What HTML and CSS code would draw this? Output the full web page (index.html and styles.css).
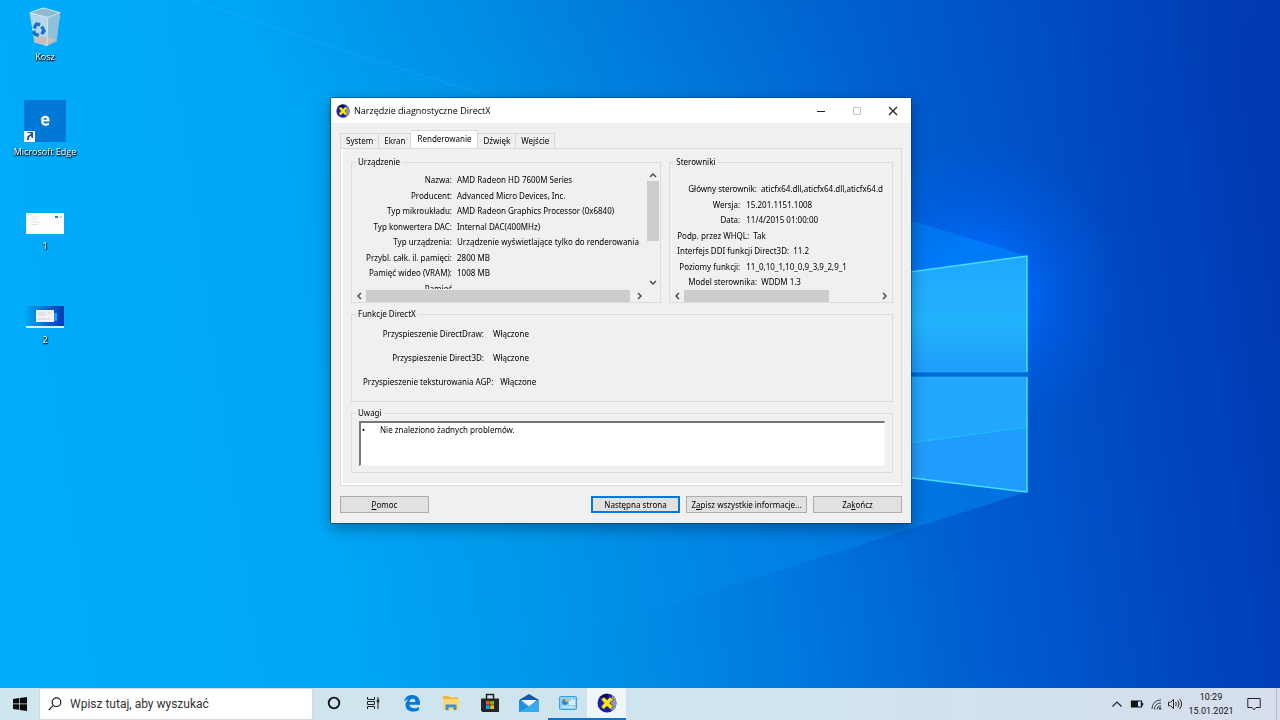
FILE: index.html
```
<!DOCTYPE html>
<html lang="pl">
<head>
  <meta charset="UTF-8">
  <meta name="viewport" content="width=device-width, initial-scale=1.0">
  <title>Narzędzie diagnostyczne DirectX</title>
  <link rel="stylesheet" href="styles.css">
</head>
<body>

  <!-- Wallpaper -->
  <svg class="wallpaper" viewBox="0 0 1280 720" preserveAspectRatio="none" aria-hidden="true">
    <defs>
      <linearGradient id="sky" gradientUnits="userSpaceOnUse" x1="0" y1="420" x2="1270" y2="240">
        <stop offset="0" stop-color="#00adfb"/>
        <stop offset=".24" stop-color="#00a6f6"/>
        <stop offset=".42" stop-color="#0094e8"/>
        <stop offset=".58" stop-color="#007ade"/>
        <stop offset=".74" stop-color="#005ccf"/>
        <stop offset=".88" stop-color="#0048c1"/>
        <stop offset="1" stop-color="#003ab2"/>
      </linearGradient>
      <linearGradient id="mini" x1="0" y1="0" x2="1" y2="0">
        <stop offset="0" stop-color="#00a4f4"/>
        <stop offset="1" stop-color="#003ab2"/>
      </linearGradient>
      <radialGradient id="shade" gradientUnits="userSpaceOnUse" cx="0" cy="0" r="1" gradientTransform="translate(760 -20) scale(560 190)">
        <stop offset="0" stop-color="#0055bb" stop-opacity=".25"/>
        <stop offset="1" stop-color="#0055bb" stop-opacity="0"/>
      </radialGradient>
      <radialGradient id="glow" gradientUnits="userSpaceOnUse" cx="0" cy="0" r="1" gradientTransform="translate(975 295) scale(150 150)">
        <stop offset="0" stop-color="#0072ff"/>
        <stop offset=".3" stop-color="#006cff" stop-opacity=".85"/>
        <stop offset=".65" stop-color="#0064f0" stop-opacity=".35"/>
        <stop offset="1" stop-color="#0060f0" stop-opacity="0"/>
      </radialGradient>
      <linearGradient id="pane" x1="0" y1="0" x2="0" y2="1">
        <stop offset="0" stop-color="#20a8ff"/>
        <stop offset=".6" stop-color="#22b2fb"/>
        <stop offset="1" stop-color="#1e9cfb"/>
      </linearGradient>
      <linearGradient id="ray" x1="0" y1="0" x2="1" y2="0">
        <stop offset="0" stop-color="#00a8ff" stop-opacity="0"/>
        <stop offset=".5" stop-color="#00a0f8" stop-opacity=".1"/>
        <stop offset="1" stop-color="#0098ff" stop-opacity=".6"/>
      </linearGradient>
    </defs>
    <rect width="1280" height="720" fill="url(#sky)"/>
    <rect width="1280" height="720" fill="url(#shade)"/>
    <rect width="1280" height="720" fill="url(#glow)"/>
    <path d="M190 0 1027 256V492L560 640 200 720V0z" fill="url(#ray)" opacity=".7"/>
    <path d="M190 0 480 94" stroke="#48b8f8" stroke-opacity=".25"/>
    <path d="M800 287 1027 256V372H800z" fill="url(#pane)"/>
    <path d="M800 377H1027V492L800 464z" fill="#209cfc"/>
    <path d="M800 377H1027V427L800 458z" fill="#28b4ff" opacity=".45"/>
    <path d="M800 458 1027 427" stroke="#1fc0fb" fill="none"/>
    <path d="M800 287 1027 256V372M1027 377V492L800 464" stroke="#42e0fc" stroke-width="1.5" fill="none"/>
    <path d="M800 372H1027M800 377H1027" stroke="#22b8fb" stroke-width="1" fill="none"/>
    <path d="M800 374.500H1030" stroke="#0068d8" stroke-width="4" fill="none"/>
  </svg>

  <main class="desktop">

    <!-- Desktop shortcuts -->
    <a class="shortcut bin" href="#">
      <svg width="36" height="40" viewBox="3 0 36 42" aria-hidden="true">
        <path d="M5 6 19 1 37 6 33 36 23 41 10 37z" fill="#b7d9ea" opacity=".85"/>
        <path d="M5 6 19 1 37 6 24 11z" fill="#8fb9cf"/>
        <path d="M5 6 24 11 23 41 10 37z" fill="#b4d8ea"/>
        <path d="M24 11 37 6 33 36 23 41z" fill="#8fbfd9"/>
        <path d="M9 33 20 31 33 34 23 40 10 37z" fill="#c8bdb9"/>
        <path d="M5 6 19 1 37 6 24 11zM24 11 23 41" stroke="#cfe6f2" fill="none"/>
        <g fill="none" stroke="#1c70c4" stroke-width="3.500">
          <path d="M9.500 22.500 12 18 16 18.500"/>
          <path d="M17.500 20.500 20 25 17.500 28.500"/>
          <path d="M14.500 30 10.500 28.500 9 25"/>
        </g>
      </svg>
      <span>Kosz</span>
    </a>
    <a class="shortcut edge" href="#">
      <svg width="42" height="42" viewBox="0 0 42 42" aria-hidden="true">
        <rect width="42" height="42" fill="#0078d7"/>
        <path d="M16.500 20.500c.3-3 2.300-4.700 4.800-4.700 2.700 0 4.300 1.800 4.300 4.500v1.200h-6.200c.2 1.500 1.300 2 2.700 2 1.100 0 2-.3 2.800-.8v2.200c-.9.500-2 .8-3.300.8-2.700 0-4.500-1.500-4.500-3.900 0-1.200.6-2.200 1.500-2.800-.9.200-1.600.7-2.100 1.500zm3-.8h3.400c-.1-1-.6-1.700-1.600-1.700s-1.600.7-1.800 1.700z" fill="#fff"/>
        <rect x="0" y="31" width="11" height="11" fill="#f4f6fa"/>
        <path d="M3 40c-.5-3 1-5 3.500-5.500V33H3.500v-1H9v6H8l-1-2c-2 .6-2.500 2-2 4z" fill="#204f9c"/>
      </svg>
      <span>Microsoft Edge</span>
    </a>
    <a class="shortcut shot-one" href="#">
      <svg width="38" height="21" viewBox="0 0 38 21" aria-hidden="true">
        <rect width="38" height="21" fill="#fdfdfd"/>
        <path d="M2 1.500h4M5 4h8M5 6.500h6M5 9h9M5 11.500h7" stroke="#e0e2e4"/>
        <path d="M29 4h3" stroke="#1c7fd8" stroke-width="2"/>
        <path d="M33 4h3" stroke="#8ec0ea"/>
      </svg>
      <span>1</span>
    </a>
    <a class="shortcut shot-two" href="#">
      <svg width="38" height="22" viewBox="0 0 38 22" aria-hidden="true">
        <rect width="38" height="21" fill="url(#mini)"/>
        <rect x="24" y="7" width="7" height="8" fill="#1e9cfb"/>
        <rect x="10" y="4" width="18" height="12" fill="#f2f2f2"/>
        <path d="M12 7h7M12 9h8M21 7h5M12 13h12" stroke="#cfcfcf"/>
        <rect y="20" width="38" height="2" fill="#dcecf4"/>
      </svg>
      <span>2</span>
    </a>

    <!-- Diagnostic tool window -->
    <section class="window" aria-label="Narzędzie diagnostyczne DirectX">
      <header class="title-bar">
        <svg width="14" height="14" viewBox="0 0 20 20" aria-hidden="true">
          <use href="#dx-logo"/>
        </svg>
        <h1>Narzędzie diagnostyczne DirectX</h1>
        <button class="caption-btn" aria-label="Minimalizuj"><svg width="10" height="10" viewBox="0 0 10 10"><path d="M1 5.500h8" stroke="#222"/></svg></button>
        <button class="caption-btn" aria-label="Maksymalizuj" disabled><svg width="10" height="10" viewBox="0 0 10 10"><path d="M1.500 1.500h7v7h-7z" fill="none" stroke="#c4c4c4"/></svg></button>
        <button class="caption-btn" aria-label="Zamknij"><svg width="10" height="10" viewBox="0 0 10 10"><path d="M1 1l8 8M9 1l-8 8" stroke="#222" stroke-width="1.200"/></svg></button>
      </header>

      <div class="tabs" role="tablist">
        <button class="tab" role="tab">System</button>
        <button class="tab" role="tab">Ekran</button>
        <button class="tab active" role="tab" aria-selected="true">Renderowanie</button>
        <button class="tab" role="tab">Dźwięk</button>
        <button class="tab" role="tab">Wejście</button>
      </div>

      <div class="panel" role="tabpanel">
        <div class="groups">
          <fieldset class="group device">
            <legend>Urządzenie</legend>
            <div class="scroll-area">
              <dl class="props">
                <div><dt>Nazwa:</dt><dd>AMD Radeon HD 7600M Series</dd></div>
                <div><dt>Producent:</dt><dd>Advanced Micro Devices, Inc.</dd></div>
                <div><dt>Typ mikroukładu:</dt><dd>AMD Radeon Graphics Processor (0x6840)</dd></div>
                <div><dt>Typ konwertera DAC:</dt><dd>Internal DAC(400MHz)</dd></div>
                <div><dt>Typ urządzenia:</dt><dd>Urządzenie wyświetlające tylko do renderowania</dd></div>
                <div><dt>Przybl. całk. il. pamięci:</dt><dd>2800 MB</dd></div>
                <div><dt>Pamięć wideo (VRAM):</dt><dd>1008 MB</dd></div>
                <div><dt>Pamięć</dt><dd></dd></div>
              </dl>
              <div class="scroll-y">
                <svg width="12" height="12" viewBox="0 0 12 12"><path d="M3 8l3-3 3 3" class="arrow"/></svg>
                <div class="thumb"></div>
                <svg width="12" height="12" viewBox="0 0 12 12"><path d="M3 4l3 3 3-3" class="arrow"/></svg>
              </div>
            </div>
            <div class="scroll-x">
              <svg width="14" height="12" viewBox="0 0 14 12"><path d="M9 3L6 6l3 3" class="arrow"/></svg>
              <div class="thumb"></div>
              <svg width="14" height="12" viewBox="0 0 14 12"><path d="M5 3l3 3-3 3" class="arrow"/></svg>
            </div>
          </fieldset>

          <fieldset class="group drivers">
            <legend>Sterowniki</legend>
            <dl class="props">
              <div class="indent"><dt>Główny sterownik:</dt><dd>aticfx64.dll,aticfx64.dll,aticfx64.d</dd></div>
              <div class="column"><dt>Wersja:</dt><dd>15.201.1151.1008</dd></div>
              <div class="column"><dt>Data:</dt><dd>11/4/2015 01:00:00</dd></div>
              <div><dt>Podp. przez WHQL:</dt><dd>Tak</dd></div>
              <div><dt>Interfejs DDI funkcji Direct3D:</dt><dd>11.2</dd></div>
              <div class="column"><dt>Poziomy funkcji:</dt><dd>11_0,10_1,10_0,9_3,9_2,9_1</dd></div>
              <div class="indent"><dt>Model sterownika:</dt><dd>WDDM 1.3</dd></div>
            </dl>
            <div class="scroll-x">
              <svg width="14" height="12" viewBox="0 0 14 12"><path d="M9 3L6 6l3 3" class="arrow"/></svg>
              <div class="thumb"></div>
              <svg width="14" height="12" viewBox="0 0 14 12"><path d="M5 3l3 3-3 3" class="arrow"/></svg>
            </div>
          </fieldset>
        </div>

        <fieldset class="group features">
          <legend>Funkcje DirectX</legend>
          <dl>
            <div><dt>Przyspieszenie DirectDraw:</dt><dd>Włączone</dd></div>
            <div><dt>Przyspieszenie Direct3D:</dt><dd>Włączone</dd></div>
            <div class="wide"><dt>Przyspieszenie teksturowania AGP:</dt><dd>Włączone</dd></div>
          </dl>
        </fieldset>

        <fieldset class="group notes">
          <legend><label for="notes">Uwagi</label></legend>
          <textarea id="notes" readonly>•&#9;Nie znaleziono żadnych problemów.</textarea>
        </fieldset>
      </div>

      <footer class="actions">
        <button class="btn help"><u>P</u>omoc</button>
        <button class="btn primary">Następna strona</button>
        <button class="btn save">Z<u>a</u>pisz wszystkie informacje...</button>
        <button class="btn">Za<u>k</u>ończ</button>
      </footer>
    </section>
  </main>

  <!-- Taskbar -->
  <nav class="taskbar" aria-label="Pasek zadań">
    <button class="start" aria-label="Start">
      <svg width="14" height="14" viewBox="0 0 14 14"><path d="M0 2l6-.9v5.500H0zM6.700 1 14 0v6.600H6.700zM0 7.300h6v5.500L0 12zM6.700 7.300H14V14l-7.300-1z" fill="#0a0a0a"/></svg>
    </button>
    <label class="search">
      <svg width="14" height="14" viewBox="0 0 14 14" fill="none" stroke="#222" stroke-width="1.200"><circle cx="8.500" cy="5.200" r="4.300"/><path d="M5.400 8.400.8 13"/></svg>
      <input type="text" placeholder="Wpisz tutaj, aby wyszukać" aria-label="Wyszukaj">
    </label>
    <div class="apps">
      <button class="app" aria-label="Cortana">
        <svg width="14" height="14" viewBox="0 0 14 14"><circle cx="7" cy="7" r="5.300" fill="none" stroke="#111" stroke-width="1.800"/></svg>
      </button>
      <button class="app" aria-label="Widok zadań">
        <svg width="14" height="14" viewBox="0 0 14 14" fill="none" stroke="#222"><path d="M1.500 1v2.500h7V1M1.500 13v-2.500h7V13M1.500 5.500h7v3h-7zM12 1v12"/><path d="M12 3.500v3" stroke-width="2.400"/></svg>
      </button>
      <button class="app" aria-label="Edge">
        <svg width="18" height="18" viewBox="0 0 18 18"><path d="M1 8C1.500 3.500 5 1 9 1c5 0 8 3.300 8 8v1.800H6.300c.3 2.400 2.200 3.400 4.700 3.400 1.800 0 3.500-.5 4.900-1.300v3.400C14.400 17.100 12.300 17.500 10 17.500c-4.500 0-7.500-2.700-7.500-6.500 0-2.500 1.300-4.300 3-5.400C3.500 5.800 1.900 6.800 1 8zm5.300.1h6.300C12.500 6 11.500 4.800 9.600 4.800 7.800 4.800 6.600 6.100 6.300 8.100z" fill="#0a78d6"/></svg>
      </button>
      <button class="app" aria-label="Eksplorator plików">
        <svg width="18" height="16" viewBox="0 0 18 16"><path d="M1 1h6l1 1.500h8V15H1z" fill="#f2b632"/><path d="M1 4h16v11H1z" fill="#fdd873"/><path d="M3.500 15V9.500h11V15h-3v-2.500h-5V15z" fill="#3f8fd6"/></svg>
      </button>
      <button class="app" aria-label="Microsoft Store">
        <svg width="20" height="20" viewBox="0 0 20 20"><path d="M6.500 6V1.500h7V6" fill="none" stroke="#222" stroke-width="1.500"/><path d="M1 5.500h18V19H2.500L1 17.500z" fill="#262628"/><path d="M6 8h3.700v3.700H6z" fill="#f25022"/><path d="M10.300 8H14v3.700h-3.700z" fill="#7fba00"/><path d="M6 12.300h3.700V16H6z" fill="#00a4ef"/><path d="M10.300 12.300H14V16h-3.700z" fill="#ffb900"/></svg>
      </button>
      <button class="app" aria-label="Poczta">
        <svg width="20" height="18" viewBox="0 0 20 18"><path d="M0 6l10-6 10 6-10 6z" fill="#0f5ba8"/><path d="M2 6h16l-8 6.500z" fill="#f4f8fc"/><path d="M0 6l10 6.500L20 6v12H0z" fill="#1e90e0"/><path d="M0 18 20 6v12z" fill="#35aaf2"/></svg>
      </button>
      <button class="app running" aria-label="Panel sterowania">
        <svg width="18" height="14" viewBox="0 0 18 14"><rect x=".5" y=".5" width="17" height="13" rx="1" fill="#8ccff4" stroke="#3e9fd8"/><circle cx="6" cy="6" r="3" fill="#eef7fd"/><path d="M6 6V3a3 3 0 1 0 3 3z" fill="#2c86cf"/><path d="M6 6V3a3 3 0 0 1 3 3z" fill="#f0a030"/><path d="M11 9V5M13 9V3M15 9V4" stroke="#f7fbfe" stroke-width="1.500"/><path d="M3 11h12" stroke="#f7fbfe"/></svg>
      </button>
      <button class="app running current" aria-label="Narzędzie diagnostyczne DirectX">
        <svg width="20" height="20" viewBox="0 0 20 20">
          <g id="dx-logo">
            <circle cx="10" cy="10" r="9.500" fill="#1a1fb4"/>
            <path d="M15 2a9.500 9.500 0 0 1 0 16l-2-3z" fill="#8c96b8"/>
            <path d="M3 4a9 9 0 0 1 8-3l-1 4z" fill="#0a0a38"/>
            <path d="M4 6.500 7 4l3 3L13 4l3.500 2.300L12.800 10 16 13.700 13.300 16.300 10 13.300 6.700 16.300 4 13.700 7.200 10z" fill="#f6e420" stroke="#333300" stroke-width=".6"/>
          </g>
        </svg>
      </button>
    </div>
    <div class="tray">
      <svg width="20" height="14" viewBox="0 0 20 14" fill="none" stroke="#222" stroke-width="1.200"><path d="M5.500 9.500 10 5l4.500 4.500"/></svg>
      <svg width="20" height="14" viewBox="0 0 20 14"><path d="M4.500 4h10v6h-10z" fill="none" stroke="#111" stroke-width="1.200"/><path d="M5 4h6v6H5z" fill="#111"/><path d="M15.500 6v2.500" stroke="#111" stroke-width="1.400"/></svg>
      <svg width="20" height="14" viewBox="0 0 20 14" fill="none" stroke="#333"><path d="M5 12A8.500 8.500 0 0 1 14 3M7.500 12.500A6 6 0 0 1 14 6M10 12.500a3.500 3.500 0 0 1 4-3.500"/><circle cx="13" cy="11.500" r=".8" fill="#222"/></svg>
      <svg width="16" height="14" viewBox="0 0 16 14" fill="none" stroke="#222"><path d="M1.500 5.200h2L6.500 2.500v9L3.500 8.800h-2zM8.500 5a3 3 0 0 1 0 4M10.500 3.500a5 5 0 0 1 0 7M12.500 2a7 7 0 0 1 0 10"/></svg>
      <time class="clock" datetime="2021-01-15T10:29"><span>10:29</span><span>15.01.2021</span></time>
      <button class="notify" aria-label="Powiadomienia">
        <svg width="14" height="14" viewBox="0 0 14 14" fill="none" stroke="#222"><path d="M.8 1.500h12.400v9H9l-2 2.300-2-2.300H.8z"/></svg>
      </button>
    </div>
  </nav>

</body>
</html>
```

FILE: styles.css
```
* {
  box-sizing: border-box;
}

body {
  margin: 0;
  height: 100vh;
  display: flex;
  flex-direction: column;
  overflow: hidden;
  font-family: Roboto, sans-serif;
  font-size: 9px;
  color: #111;
}

button {
  padding: 0;
  border: none;
  background: none;
  font: inherit;
  color: inherit;
}

dl, dd {
  margin: 0;
}

.wallpaper {
  position: fixed;
  width: 100%;
  height: 100%;
  z-index: -1;
}

.desktop {
  position: relative;
  flex: 1;
}

/* Desktop shortcuts */
.shortcut {
  position: absolute;
  left: 5px;
  width: 80px;
  display: flex;
  flex-direction: column;
  align-items: center;
  gap: 3px;
  color: #fff;
  font-family: "Open Sans", sans-serif;
  font-size: 9px;
  line-height: 14px;
  text-decoration: none;
  text-shadow: 0 1px 2px #000, 1px 1px 1px #000;
}

.bin {
  top: 7px;
}

.edge {
  top: 100px;
}

.shot-one {
  top: 213px;
  gap: 5px;
}

.shot-two {
  top: 306px;
  gap: 5px;
}

/* Window */
.window {
  position: absolute;
  left: 331px;
  top: 98px;
  width: 45vw;
  min-width: 580px;
  background-color: #f0f0f0;
  color: #000;
  font-family: "Noto Sans", sans-serif;
  font-size: 8px;
  box-shadow: 0 0 0 1px rgba(0, 50, 110, 0.5), 0 5px 14px rgba(0, 0, 0, 0.35);
}

.title-bar {
  display: flex;
  align-items: center;
  height: 25px;
  padding-left: 5px;
  background-color: #fff;
}

.title-bar h1 {
  flex: 1;
  margin: 0 0 0 4px;
  font-family: "Open Sans", sans-serif;
  font-size: 9px;
  font-weight: normal;
}

.caption-btn {
  width: 36px;
  height: 24px;
}

.tabs {
  display: flex;
  align-items: flex-end;
  height: 25px;
  padding-left: 9px;
}

.tab {
  height: 15px;
  padding: 0 5px;
  border: 1px solid #d9d9d9;
  border-width: 1px 1px 0 0;
  line-height: 14px;
}

.tab:first-child {
  border-left-width: 1px;
}

.tab.active {
  height: 18px;
  padding: 0 6px 2px;
  background-color: #fff;
}

.panel {
  display: flex;
  flex-direction: column;
  gap: 4px;
  margin: 0 9px;
  padding: 6px 8px 12px 10px;
  border: 1px solid #dcdcdc;
  box-shadow: inset 2px -2px #fff;
}

.groups {
  display: flex;
  gap: 8px;
}

.group {
  min-width: 0;
  margin: 0;
  padding: 0;
  border: 1px solid #dcdcdc;
}

.group legend {
  margin-left: 4px;
  padding: 0 2px;
  line-height: 14px;
}

.device,
.drivers {
  display: flex;
  flex-direction: column;
  height: 148px;
}

.device {
  flex: 310;
}

.drivers {
  flex: 223;
}

.scroll-area {
  display: flex;
  height: 120px;
  overflow: hidden;
}

.props {
  flex: 1;
  overflow: hidden;
  white-space: nowrap;
  display: grid;
  grid-auto-rows: 16px 15px;
  line-height: 12px;
}

.props > div {
  display: flex;
  gap: 4px;
}

.device .props {
  padding-top: 5px;
}

.device .props > div {
  gap: 5px;
}

.device dt {
  width: 100px;
  text-align: right;
}

.drivers .props {
  flex: none;
  height: 120px;
  padding: 14px 0 0 7px;
}

.drivers .indent {
  padding-left: 11px;
}

.props > .column {
  gap: 6px;
}

.drivers .column dt {
  width: 63px;
  text-align: right;
}

.scroll-y {
  display: flex;
  flex-direction: column;
  width: 14px;
  align-items: center;
}

.scroll-y .thumb {
  width: 12px;
  height: 60px;
  margin-bottom: auto;
}

.scroll-x {
  display: flex;
  align-items: center;
  height: 13px;
}

.scroll-x .thumb {
  width: 264px;
  height: 12px;
  margin-right: auto;
}

.device .scroll-x {
  padding-right: 13px;
}

.drivers .scroll-x .thumb {
  width: 145px;
}

.thumb {
  background-color: #cdcdcd;
}

.arrow {
  fill: none;
  stroke: #444;
  stroke-width: 1.4;
}

.features {
  height: 95px;
}

.features dl {
  display: flex;
  flex-direction: column;
  gap: 10px;
  padding: 6px 0 0 11px;
  line-height: 14px;
}

.features dl > div {
  display: flex;
  gap: 9px;
}

.features dt {
  width: 121px;
  text-align: right;
}

.features .wide {
  gap: 7px;
}

.features .wide dt {
  width: auto;
}

.notes {
  padding: 1px 7px 6px;
}

.notes legend {
  margin-left: -3px;
}

.notes textarea {
  display: block;
  width: 100%;
  height: 45px;
  padding: 0 1px;
  border: 1px solid #f8f8f8;
  border-top: 2px solid #777;
  border-left: 2px solid #777;
  background-color: #fff;
  color: #000;
  font: inherit;
  line-height: 13px;
  resize: none;
  outline: none;
  tab-size: 18px;
}

.actions {
  display: flex;
  gap: 6px;
  padding: 10px 9px;
}

.btn {
  width: 89px;
  height: 17px;
  border: 1px solid #adadad;
  background-color: #e1e1e1;
  line-height: 15px;
  white-space: nowrap;
}

.btn.help {
  margin-right: auto;
}

.btn.primary {
  border: 2px solid #0078d7;
  line-height: 13px;
}

.btn.save {
  width: 121px;
}

/* Taskbar */
.taskbar {
  display: flex;
  height: 32px;
  background: linear-gradient(to right, #cee6ee, #cfe4ee 60%, #d6deee);
}

.start {
  width: 39px;
  display: flex;
  align-items: center;
  justify-content: center;
}

.search {
  display: flex;
  align-items: center;
  gap: 8px;
  width: 274px;
  padding-left: 8px;
  background-color: #fff;
  border: 1px solid #d4dadc;
}

.search input {
  flex: 1;
  min-width: 0;
  padding: 0;
  border: none;
  outline: none;
  background: none;
  font-family: inherit;
  font-size: 12px;
}

.search input::placeholder {
  color: #333;
}

.apps {
  display: flex;
  margin-left: 1px;
}

.app {
  display: flex;
  align-items: center;
  justify-content: center;
  width: 39px;
  border-bottom: 2px solid transparent;
}

.app.running {
  border-bottom-color: #0a74d0;
}

.app.current {
  background-color: #eff6fa;
}

.tray {
  display: flex;
  align-items: center;
  margin-left: auto;
  margin-right: 3px;
  border-right: 1px solid #b4bfcc;
}

.clock {
  display: flex;
  flex-direction: column;
  width: 56px;
  text-align: center;
  line-height: 14px;
}

.notify {
  width: 30px;
  height: 32px;
  margin-right: 7px;
}

.notify svg,
.caption-btn svg {
  display: block;
  margin: auto;
}
```
